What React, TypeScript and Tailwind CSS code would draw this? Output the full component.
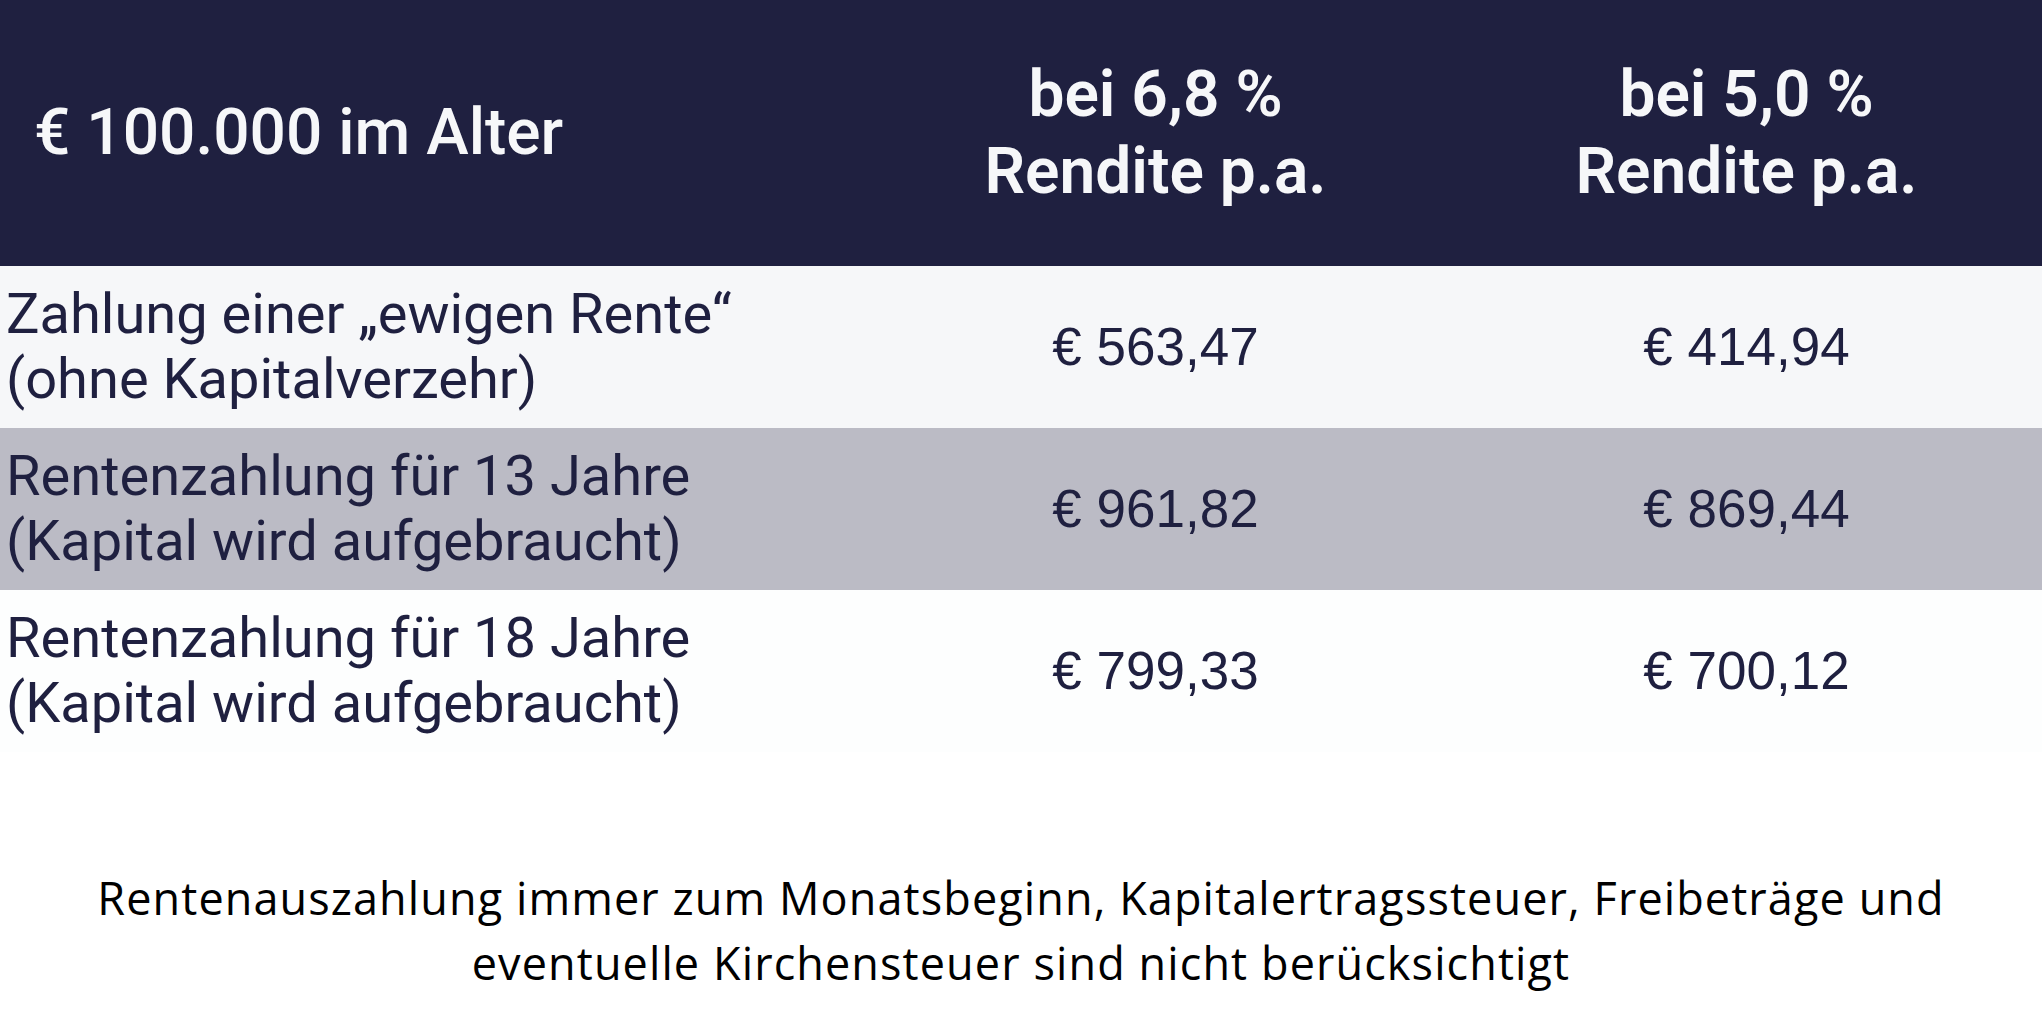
const rows = [
  {
    label: ['Zahlung einer „ewigen Rente“', '(ohne Kapitalverzehr)'],
    a: '€ 563,47',
    b: '€ 414,94',
    bg: 'bg-[#f6f7f9]',
  },
  {
    label: ['Rentenzahlung für 13 Jahre', '(Kapital wird aufgebraucht)'],
    a: '€ 961,82',
    b: '€ 869,44',
    bg: 'bg-[#bbbbc5]',
  },
  {
    label: ['Rentenzahlung für 18 Jahre', '(Kapital wird aufgebraucht)'],
    a: '€ 799,33',
    b: '€ 700,12',
    bg: 'bg-[#fdfefe]',
  },
]

const rates = ['6,8', '5,0']

export default function App() {
  return (
    <div className="min-h-screen w-[2042px] bg-white">
      <div className="grid grid-cols-[860px_1fr_1fr]">
        {/* header */}
        <div className="col-span-3 grid h-[266px] grid-cols-subgrid bg-[#1f2040] text-[#f6f7f9] font-['Roboto',sans-serif]">
          <div className="flex items-center pl-[34px] text-[64px] font-medium leading-none">
            € 100.000 im Alter
          </div>
          {rates.map((r) => (
            <div key={r} className="flex flex-col items-center justify-center text-[64px] font-semibold leading-[77px]">
              <span>bei {r} %</span>
              <span>Rendite p.a.</span>
            </div>
          ))}
        </div>

        {rows.map((row, i) => (
          <div key={i} className={'col-span-3 grid h-[162px] grid-cols-subgrid text-[#1f2040] ' + row.bg}>
            <div className="flex flex-col justify-center pl-[6px] font-['Roboto',sans-serif] text-[56px] leading-[65px]">
              <span>{row.label[0]}</span>
              <span>{row.label[1]}</span>
            </div>
            <div className="flex items-center justify-center font-['Liberation_Sans',Arial,sans-serif] text-[53px]">
              {row.a}
            </div>
            <div className="flex items-center justify-center font-['Liberation_Sans',Arial,sans-serif] text-[53px]">
              {row.b}
            </div>
          </div>
        ))}
      </div>

      <p className="mt-[113px] text-center font-['Open_Sans',sans-serif] text-[45px] leading-[65px] tracking-[1.1px] text-black">
        Rentenauszahlung immer zum Monatsbeginn, Kapitalertragssteuer, Freibeträge und
        <br />
        eventuelle Kirchensteuer sind nicht berücksichtigt
      </p>
    </div>
  )
}
